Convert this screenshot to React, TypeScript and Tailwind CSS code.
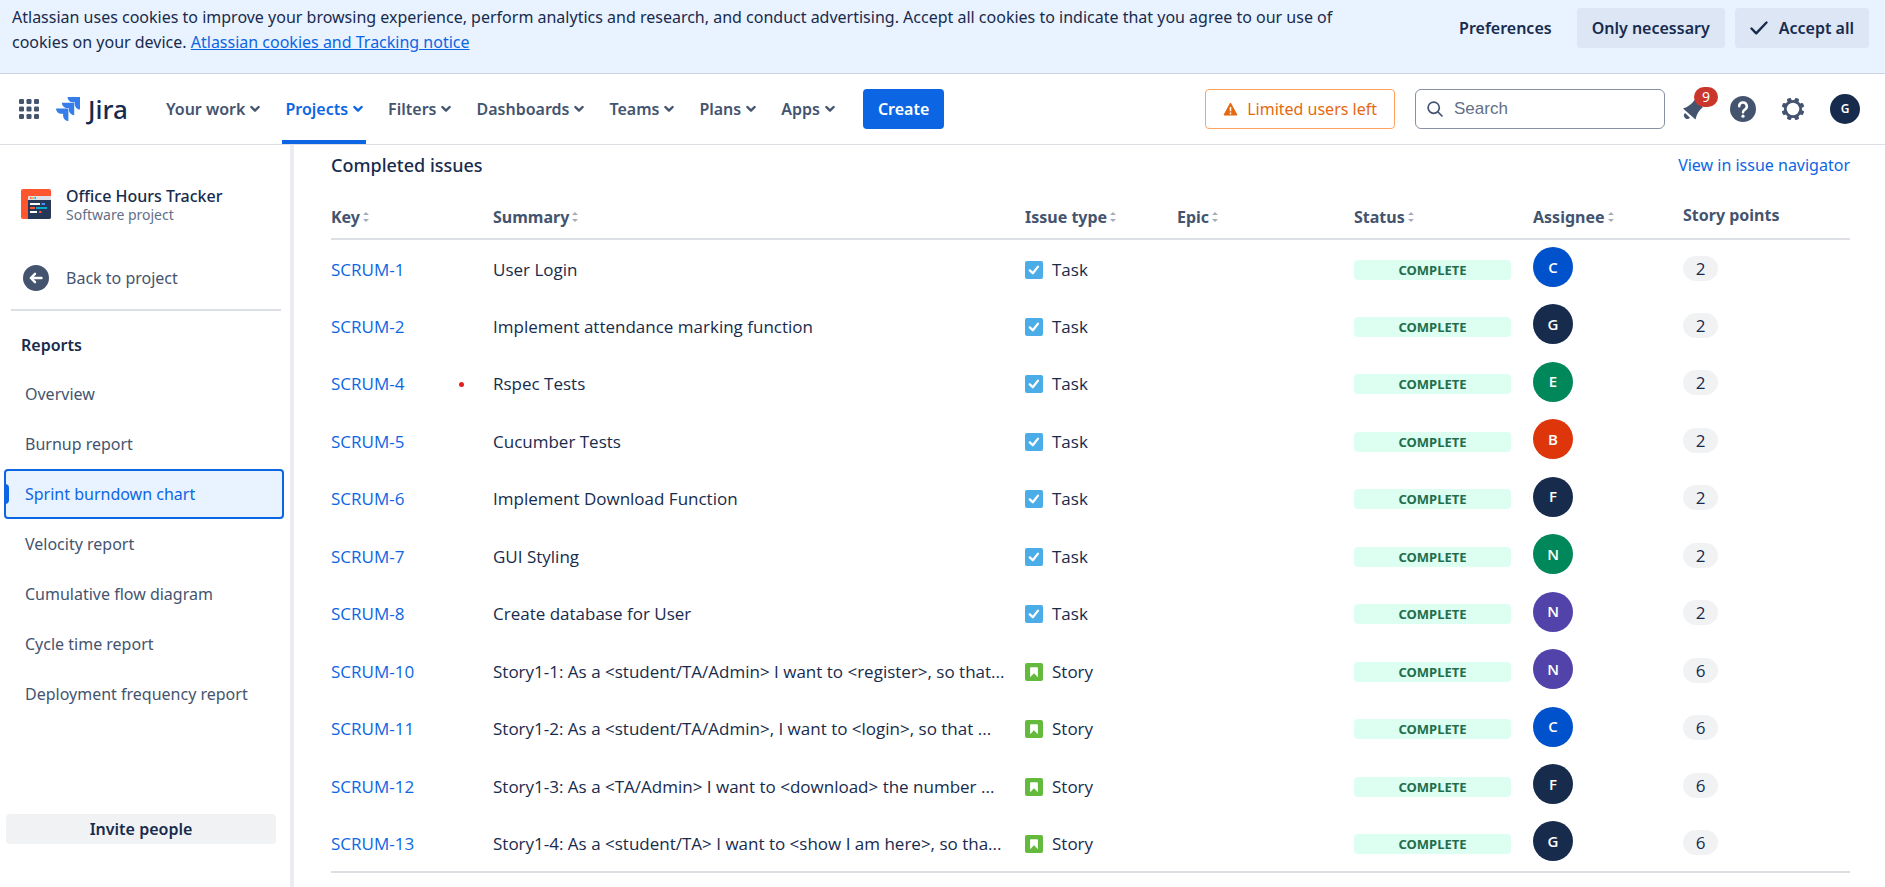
import React from "react";

const ISSUES = [
  { key: "SCRUM-1", summary: "User Login", type: "Task", who: "C", tone: "bg-[#0052cc]", points: 2 },
  { key: "SCRUM-2", summary: "Implement attendance marking function", type: "Task", who: "G", tone: "bg-[#172b4d]", points: 2 },
  { key: "SCRUM-4", summary: "Rspec Tests", type: "Task", who: "E", tone: "bg-[#00875a]", points: 2, marked: true },
  { key: "SCRUM-5", summary: "Cucumber Tests", type: "Task", who: "B", tone: "bg-[#de350b]", points: 2 },
  { key: "SCRUM-6", summary: "Implement Download Function", type: "Task", who: "F", tone: "bg-[#172b4d]", points: 2 },
  { key: "SCRUM-7", summary: "GUI Styling", type: "Task", who: "N", tone: "bg-[#00875a]", points: 2 },
  { key: "SCRUM-8", summary: "Create database for User", type: "Task", who: "N", tone: "bg-[#5243aa]", points: 2 },
  { key: "SCRUM-10", summary: "Story1-1: As a <student/TA/Admin> I want to <register>, so that...", type: "Story", who: "N", tone: "bg-[#5243aa]", points: 6 },
  { key: "SCRUM-11", summary: "Story1-2: As a <student/TA/Admin>, I want to <login>, so that ...", type: "Story", who: "C", tone: "bg-[#0052cc]", points: 6 },
  { key: "SCRUM-12", summary: "Story1-3: As a <TA/Admin> I want to <download> the number ...", type: "Story", who: "F", tone: "bg-[#172b4d]", points: 6 },
  { key: "SCRUM-13", summary: "Story1-4: As a <student/TA> I want to <show I am here>, so tha...", type: "Story", who: "G", tone: "bg-[#172b4d]", points: 6 },
];

const REPORTS = [
  "Overview",
  "Burnup report",
  "Sprint burndown chart",
  "Velocity report",
  "Cumulative flow diagram",
  "Cycle time report",
  "Deployment frequency report",
];

const NAV = ["Your work", "Projects", "Filters", "Dashboards", "Teams", "Plans", "Apps"];

function Chevron() {
  return (
    <svg width="10" height="8" viewBox="0 0 10 8" fill="none" stroke="currentColor" strokeWidth="2.4" strokeLinecap="round" strokeLinejoin="round" aria-hidden="true">
      <path d="M1.4 2 5 5.6 8.6 2" />
    </svg>
  );
}

function Sorter() {
  return (
    <svg width="6" height="10" viewBox="0 0 6 10" fill="#a5adba" aria-hidden="true">
      <path d="M3 0 6 3H0zM3 10 0 7h6z" />
    </svg>
  );
}

function TypeIcon({ type }: { type: string }) {
  return type === "Task" ? (
    <svg width="18" height="18" viewBox="0 0 18 18" aria-hidden="true">
      <rect width="18" height="18" rx="2" fill="#4bade8" />
      <path d="M4.8 9.4 7.8 12.2 13 5.6" fill="none" stroke="#fff" strokeWidth="2.3" strokeLinecap="round" strokeLinejoin="round" />
    </svg>
  ) : (
    <svg width="18" height="18" viewBox="0 0 18 18" aria-hidden="true">
      <rect width="18" height="18" rx="2" fill="#63ba3c" />
      <path d="M5.9 4.2h6.2a.8.8 0 0 1 .8.8v9.2L9 10.2l-3.900 4V5a.8.8 0 0 1 .8-.8z" fill="#fff" />
    </svg>
  );
}

function CookieBanner() {
  return (
    <section aria-label="Cookies" className="flex items-start gap-16 border-b border-[#c9d3e4] bg-[#e9f2ff] pt-[5px] pr-4 pb-[18px] pl-3 text-[#172b4d]">
      <p className="min-w-0 flex-1 leading-[25px]">
        Atlassian uses cookies to improve your browsing experience, perform analytics and research, and conduct advertising. Accept all cookies to indicate that you agree to our use of cookies on your device.{" "}
        <a href="#cookies" className="text-[#0c66e4] underline">Atlassian cookies and Tracking notice</a>
      </p>
      <div className="mt-[3px] flex shrink-0 gap-[10px] font-semibold">
        <button className="h-10 px-[15px]">Preferences</button>
        <button className="h-10 rounded bg-[#dde6f5] px-[15px]">Only necessary</button>
        <button className="flex h-10 items-center gap-[11px] rounded bg-[#dde6f5] px-[15px]">
          <svg width="18" height="14" viewBox="0 0 18 14" fill="none" stroke="currentColor" strokeWidth="2.4" strokeLinecap="round" strokeLinejoin="round" aria-hidden="true">
            <path d="M1.5 7.5 6.2 12.3 16.5 1.5" />
          </svg>
          Accept all
        </button>
      </div>
    </section>
  );
}

function JiraLogo() {
  return (
    <a href="#home" className="flex items-center gap-2 text-[#172b4d]">
      <svg width="24" height="24" viewBox="0 0 24 24" aria-hidden="true">
        <path d="M11.500 0H24v12.500a5.500 5.500 0 0 1-5.300-5.300V5.300h-1.900A5.400 5.400 0 0 1 11.500 0z" fill="#357de8" />
        <path d="M5.800 5.800h12.400v12.400a5.500 5.500 0 0 1-5.300-5.300V11H11a5.400 5.400 0 0 1-5.200-5.200z" fill="#357de8" />
        <path d="M0 11.500h12.400V24a5.500 5.500 0 0 1-5.300-5.300v-1.900H5.200A5.400 5.400 0 0 1 0 11.500z" fill="#357de8" />
      </svg>
      <span className="text-[26px] leading-8 font-medium">Jira</span>
    </a>
  );
}

function TopNav() {
  return (
    <header className="flex h-[71px] items-center border-b border-[#dcdfe4] bg-white pr-[25px] pl-[19px] text-[#44546f]">
      <button aria-label="Switch to" className="mr-[17px]">
        <svg width="20" height="20" viewBox="0 0 20 20" fill="currentColor" aria-hidden="true">
          {[0, 7.5, 15].map((y) => [0, 7.5, 15].map((x) => <rect key={`${x}-${y}`} x={x} y={y} width="5" height="5" rx="1.2" />))}
        </svg>
      </button>
      <JiraLogo />
      <nav className="ml-[35px] flex h-full gap-[19px] font-semibold">
        {NAV.map((n) => (
          <button
            key={n}
            className={`flex items-center gap-[5px] border-b-4 px-[3px] pt-1 ${n === "Projects" ? "border-[#0c66e4] text-[#0c66e4]" : "border-transparent"}`}
          >
            {n}
            <Chevron />
          </button>
        ))}
      </nav>
      <button className="ml-[25px] h-10 rounded bg-[#0c66e4] px-[15px] font-semibold text-white">Create</button>
      <div className="ml-auto flex items-center">
        <button className="mr-5 flex h-10 items-center gap-[9px] rounded border border-[#fea362] px-[17px] text-[#e56910]">
          <svg width="15" height="14" viewBox="0 0 15 14" aria-hidden="true">
            <path d="M7.5 1 14 13H1z" fill="currentColor" stroke="currentColor" strokeLinejoin="round" />
            <path d="M7.5 5v4.2M7.5 10.600v1.600" stroke="#fff" strokeWidth="1.5" />
          </svg>
          Limited users left
        </button>
        <label className="flex h-10 w-[250px] items-center gap-[11px] rounded-md border border-[#8590a2] px-[11px]">
          <svg width="16" height="16" viewBox="0 0 16 16" fill="none" stroke="currentColor" strokeWidth="1.7" strokeLinecap="round" aria-hidden="true">
            <circle cx="6.7" cy="6.7" r="5.6" />
            <path d="m11 11 4 4" />
          </svg>
          <input type="text" placeholder="Search" aria-label="Search" className="min-w-0 flex-1 font-['Liberation_Sans',sans-serif] text-[17px] outline-none placeholder:text-[#626f86]" />
        </label>
        <button aria-label="Notifications" className="relative ml-4 size-[30px]">
          <svg width="30" height="30" viewBox="0 0 30 30" fill="currentColor" aria-hidden="true">
            <path d="M2 14.5Q9 12.500 14 5.500L22 13Q16 18 14.500 25.500z" />
            <path d="M4 19a3.200 3.200 0 0 0 5 4.800z" />
          </svg>
          <span className="absolute -top-[7px] left-[13px] flex h-5 w-6 items-center justify-center rounded-full bg-[#c9372c] text-sm text-white">9</span>
        </button>
        <button aria-label="Help" className="ml-[19px]">
          <svg width="26" height="26" viewBox="0 0 26 26" aria-hidden="true">
            <circle cx="13" cy="13" r="13" fill="currentColor" />
            <path d="M9.2 10.3a3.8 3.8 0 1 1 5.600 3.300c-1.200.7-1.800 1.200-1.800 2.600" fill="none" stroke="#fff" strokeWidth="2.5" strokeLinecap="round" />
            <circle cx="13" cy="20.2" r="1.6" fill="#fff" />
          </svg>
        </button>
        <button aria-label="Settings" className="ml-[25px]">
          <svg width="24" height="24" viewBox="0 0 24 24" aria-hidden="true">
            {[22.5, 67.5, 112.5, 157.5, 202.5, 247.5, 292.5, 337.5].map((a) => (
              <rect key={a} x="9.8" y="0.6" width="4.4" height="5" rx="1.2" fill="currentColor" transform={`rotate(${a} 12 12)`} />
            ))}
            <circle cx="12" cy="12" r="7.7" fill="none" stroke="currentColor" strokeWidth="2.8" />
          </svg>
        </button>
        <button aria-label="Your profile" className="ml-[25px] size-[30px] rounded-full bg-[#172b4d] text-xs font-semibold text-white">G</button>
      </div>
    </header>
  );
}

function ProjectIcon() {
  return (
    <svg width="30" height="30" viewBox="0 0 30 30" className="shrink-0" aria-hidden="true">
      <rect width="30" height="30" rx="2" fill="#ff5630" />
      <path d="M7 11h23v17a2 2 0 0 1-2 2H7z" fill="#253858" />
      <path d="M8 7h22v4H7V8a1 1 0 0 1 1-1z" fill="#dfe1e6" />
      <circle cx="9.8" cy="9" r="0.9" fill="#ff5630" />
      <circle cx="12" cy="9" r="0.9" fill="#ffab00" />
      <circle cx="14.2" cy="9" r="0.9" fill="#00b8d9" />
      <path d="M9 15h10M9 23h7" stroke="#fff" strokeWidth="1.8" />
      <path d="M20.5 15H24" stroke="#4c9aff" strokeWidth="1.8" />
      <path d="M9 19h5M18 23h2.500" stroke="#ff5630" strokeWidth="1.8" />
      <path d="M15 19h11" stroke="#00b8d9" strokeWidth="1.8" />
    </svg>
  );
}

function Sidebar() {
  return (
    <aside className="flex w-[294px] shrink-0 flex-col border-r-4 border-[#ebecf0] pb-[43px] text-[#44546f]">
      <div className="flex items-center gap-[15px] pt-10 pl-[21px]">
        <ProjectIcon />
        <div>
          <p className="leading-[22px] font-medium text-[#172b4d]">Office Hours Tracker</p>
          <p className="text-sm leading-4 text-[#626f86]">Software project</p>
        </div>
      </div>
      <a href="#project" className="mt-[30px] flex h-[50px] items-center gap-[17px] pl-[23px]">
        <svg width="26" height="26" viewBox="0 0 26 26" aria-hidden="true">
          <circle cx="13" cy="13" r="13" fill="currentColor" />
          <path d="M18.5 13H8M12 8.800 7.800 13l4.200 4.200" fill="none" stroke="#fff" strokeWidth="2.4" strokeLinecap="round" strokeLinejoin="round" />
        </svg>
        Back to project
      </a>
      <hr className="mt-[6px] mr-[9px] ml-[11px] border-t-2 border-[#dcdfe4]" />
      <h2 className="mt-[22px] pl-[21px] leading-6 font-semibold text-[#172b4d]">Reports</h2>
      <nav className="mt-3 mr-[6px] ml-1 flex flex-col">
        {REPORTS.map((r) =>
          r === "Sprint burndown chart" ? (
            <a key={r} href="#report" aria-current="page" className="relative flex h-[50px] items-center rounded border-2 border-[#0c66e4] bg-[#e9f2ff] pl-[19px] text-[#0c66e4]">
              <span className="absolute top-[13px] -left-[2px] h-5 w-[5px] rounded-r bg-[#0c66e4]" />
              {r}
            </a>
          ) : (
            <a key={r} href="#report" className="flex h-[50px] items-center pl-[21px]">
              {r}
            </a>
          ),
        )}
      </nav>
      <button className="mt-auto mr-[14px] ml-[6px] h-[30px] rounded bg-[#f1f2f4] font-semibold text-[#172b4d]">Invite people</button>
    </aside>
  );
}

function IssueTable() {
  const heads = ["Key", "Summary", "Issue type", "Epic", "Status", "Assignee"];
  return (
    <table className="w-full table-fixed border-b-2 border-[#dcdfe4] text-left">
      <colgroup>
        <col className="w-[162px]" />
        <col />
        <col className="w-[152px]" />
        <col className="w-[177px]" />
        <col className="w-[179px]" />
        <col className="w-[150px]" />
        <col className="w-[167px]" />
      </colgroup>
      <thead className="border-b-2 border-[#dcdfe4] text-[#44546f]">
        <tr className="h-[62px]">
          {heads.map((h) => (
            <th key={h} className="pt-[18px] font-bold">
              <button className="flex items-center gap-[3px]">
                {h}
                <Sorter />
              </button>
            </th>
          ))}
          <th className="pt-[15px] font-bold">Story points</th>
        </tr>
      </thead>
      <tbody className="font-['Open_Sans','Noto_Sans',sans-serif] text-[17px]">
        {ISSUES.map((i) => (
          <tr key={i.key} className="odd:h-[58px] even:h-[57px]">
            <td className="pt-[2px] pr-[29px]">
              <div className="flex items-center justify-between">
                <a href={`#${i.key}`} className="text-[#0c66e4]">{i.key}</a>
                {i.marked && <span className="size-[5px] rounded-full bg-[#e5201c]" />}
              </div>
            </td>
            <td className="truncate pt-[2px]">{i.summary}</td>
            <td className="pt-[2px]">
              <div className="flex items-center gap-[9px]">
                <TypeIcon type={i.type} />
                {i.type}
              </div>
            </td>
            <td />
            <td className="pt-[2px] pr-[22px]">
              <span className="block rounded bg-[#dcfff1] text-center font-['Noto_Sans',sans-serif] text-[13px] leading-5 font-bold text-[#216e4e]">COMPLETE</span>
            </td>
            <td>
              <span className={`-mt-[3px] flex size-10 items-center justify-center rounded-full text-[15px] font-semibold text-white ${i.tone}`}>{i.who}</span>
            </td>
            <td>
              <span className="inline-block w-[35px] rounded-full bg-[#f1f2f4] text-center leading-[25px]">{i.points}</span>
            </td>
          </tr>
        ))}
      </tbody>
    </table>
  );
}

export default function App() {
  return (
    <div className="flex min-h-screen flex-col bg-white font-['Noto_Sans','Open_Sans',sans-serif] text-base text-[#172b4d]">
      <CookieBanner />
      <TopNav />
      <div className="flex flex-1">
        <Sidebar />
        <main className="min-w-0 flex-1 pt-[7px] pr-[35px] pl-[37px]">
          <div className="flex h-[25px] items-center justify-between">
            <h1 className="text-lg font-medium">Completed issues</h1>
            <a href="#navigator" className="text-[#0c66e4]">View in issue navigator</a>
          </div>
          <IssueTable />
        </main>
      </div>
    </div>
  );
}
